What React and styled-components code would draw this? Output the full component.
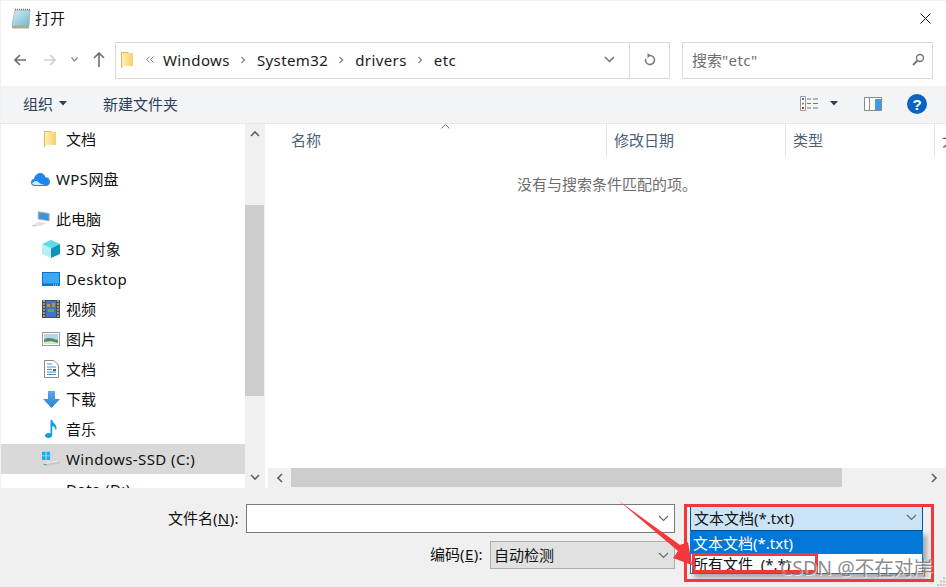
import React from "react";
import styled, { createGlobalStyle } from "styled-components";

const Global = createGlobalStyle`
  html, body { margin: 0; padding: 0; background: #fff; }
  body { font-family: "Noto Sans", "Noto Sans CJK SC", sans-serif; }
  * { box-sizing: border-box; }
`;

const Win = styled.div`
  position: relative; width: 946px; height: 587px; overflow: hidden; background: #fff;
  border-top: 1px solid #f0f0f0; border-left: 1px solid #f0f0f0;
  display: flex; flex-direction: column; font-size: 15px; color: #111;
  font-family: "Noto Sans", "Noto Sans CJK SC", sans-serif; line-height: 20px;
`;
const Latin = styled.span`letter-spacing: .4px;`;
const TitleBar = styled.div`height: 36px; display: flex; align-items: center; padding: 0 0 2px 10px; gap: 3px;`;
const TitleText = styled.span`flex: 1; color: #111;`;
const Close = styled.div`width: 11px; height: 11px; margin-right: 15px; display: flex;`;
const NavBar = styled.div`height: 49px; display: flex; padding-top: 5px; align-items: flex-start;`;
const NavButtons = styled.div`width: 114px; height: 37px; display: flex; align-items: center; padding: 0 0 2px 13px;`;
const NavIcon = styled.span`display: flex; margin-right: ${p => p.$mr || 0}px;`;
const AddressBox = styled.div`
  width: 555px; height: 37px; border: 1px solid #d9d9d9; display: flex; align-items: center; padding: 0 0 2px 5px;
`;
const Crumb = styled.span`
  color: #1a1a1a; letter-spacing: .4px; margin-right: ${p => p.$mr || 0}px; margin-left: ${p => p.$ml || 0}px; display: flex; align-items: center;
`;
const Spacer = styled.span`flex: 1;`;
const AddrEnd = styled.div`
  width: 40px; height: 35px; margin-bottom: -2px; padding-bottom: 2px; border-left: 1px solid #d9d9d9; display: flex; align-items: center; justify-content: center; margin-left: 14px;
`;
const SearchBox = styled.div`
  width: 251px; height: 37px; margin-left: 12px; border: 1px solid #d9d9d9; display: flex; align-items: center;
  padding: 0 7px 2px 9px; justify-content: space-between; color: #6d6d6d;
`;
const ToolBar = styled.div`
  height: 38px; background: #f3f4f6; border-bottom: 1px solid #e7e8ea; display: flex; align-items: center; color: #2b3f5c; padding-bottom: 2px;
`;
const ToolItem = styled.span`display: flex; align-items: center; gap: 6px; margin-left: ${p => p.$ml}px;`;
const Main = styled.div`height: 364px; display: flex;`;
const Sidebar = styled.div`width: 244px; overflow: hidden; height: 364px;`;
const NavRow = styled.div`
  height: 30px; display: flex; align-items: center; padding-left: ${p => p.$indent}px; gap: ${p => p.$tg || 6}px; color: #111;
  margin-bottom: ${p => p.$gap || 0}px; background: ${p => p.$sel ? "#d9d9d9" : "transparent"}; flex: none;
`;
const IconBox = styled.span`
  width: ${p => p.$w || 18}px; height: 18px; display: flex; align-items: center; justify-content: center; flex: none;
`;
const VScroll = styled.div`
  width: 20px; height: 364px; background: #f0f0f0; display: flex; flex-direction: column; margin-right: 3px;
`;
const ScrollBtn = styled.div`height: ${p => p.$h}px; padding-bottom: ${p => p.$pb || 0}px; display: flex; align-items: ${p => p.$end ? "flex-end" : "center"}; justify-content: center;`;
const VThumb = styled.div`width: 19px; height: 191px; background: #cdcdcd; margin-top: ${p => p.$mt}px;`;
const Content = styled.div`flex: 1; display: flex; flex-direction: column; position: relative; min-width: 0;`;
const Header = styled.div`
  height: 32px; display: grid; grid-template-columns: 339px 179px 149px 20px; color: #4c607a; overflow: hidden; position: relative;
`;
const HeaderCell = styled.div`
  padding-left: ${p => p.$pl}px; display: flex; align-items: center; border-right: 1px solid #e5e5e5; white-space: nowrap; overflow: hidden;
`;
const SortMark = styled.span`position: absolute; left: 173px; top: 0; display: flex;`;
const Empty = styled.div`flex: 1; text-align: center; padding-top: 18px; color: #6d6d6d;`;
const HScroll = styled.div`height: 20px; background: #f0f0f0; display: flex; align-items: center; flex: none;`;
const HBtn = styled.div`width: 23px; height: 20px; display: flex; align-items: center; justify-content: center;`;
const HThumb = styled.div`width: 551px; height: 19px; background: #cdcdcd; align-self: flex-start;`;
const HEnd = styled.div`margin-left: auto; width: 24px; display: flex; justify-content: center;`;
const Bottom = styled.div`flex: 1; background: #f0f0f0; display: flex; padding-top: 16px; align-items: flex-start; position: relative;`;
const FormCol = styled.div`width: 674px; display: flex; flex-direction: column; gap: 8px;`;
const FormRow = styled.div`display: flex; justify-content: flex-end; align-items: center; gap: 7px;`;
const Label = styled.label`color: #111; white-space: nowrap; padding-bottom: 2px; u { text-decoration: underline; }`;
const Input = styled.div`
  width: 429px; height: 29px; background: #fff; border: 1px solid #7a7a7a; display: flex; align-items: center; justify-content: flex-end; padding-right: 5px;
`;
const Select = styled.div`
  width: ${p => p.$w}px; height: ${p => p.$h}px; background: ${p => p.$bg}; border: 1px solid ${p => p.$bd};
  display: flex; align-items: center; justify-content: space-between; padding: 0 5px 0 3px; color: #111; white-space: nowrap; flex: none;
`;
const TypeCol = styled.div`width: 233px; margin-left: 15px; position: relative; flex: none;`;
const DropList = styled.div`
  position: absolute; left: 0; top: 27px; width: 233px; height: 43px; background: #fff; border: 1px solid #0078d7;
  box-shadow: 4px 4px 5px rgba(0,0,0,.3);
`;
const DropItem = styled.div`
  height: ${p => p.$h}px; padding-left: 2px; display: flex; align-items: center;
  background: ${p => p.$active ? "#0078d7" : "#fff"}; color: ${p => p.$active ? "#fff" : "#111"};
`;
const RedBox = styled.div`
  position: absolute; left: ${p => p.$x}px; top: ${p => p.$y}px; width: ${p => p.$w}px; height: ${p => p.$h}px;
  border: 3px solid #f5363a; pointer-events: none;
`;
const Overlay = styled.svg`position: absolute; left: -1px; top: -1px; pointer-events: none;`;
const Watermark = styled.div`
  position: absolute; left: 779px; top: 555px; font-size: 19.5px; line-height: 24px; color: rgba(120,120,120,.85);
  text-shadow: 1px 1px 1px rgba(255,255,255,.75); white-space: nowrap;
`;
const Grip = styled.svg`position: absolute; right: 0; bottom: 0;`;

const Chev = ({ d = "down", c = "#606060", s = 10 }) => {
  const paths = { down: "M1 3l4 4 4-4", up: "M1 7l4-4 4 4", left: "M7 1L3 5l4 4", right: "M3 1l4 4-4 4" };
  return <svg width={s} height={s} viewBox="0 0 10 10"><path d={paths[d]} fill="none" stroke={c} strokeWidth="1.6" /></svg>;
};
const SelChev = () => <svg width="11" height="7" viewBox="0 0 11 7"><path d="M1 1l4.500 4.500L10 1" fill="none" stroke="#666" strokeWidth="1.100" /></svg>;
const Crumbsep = () => <svg width="6" height="8" viewBox="0 0 6 8"><path d="M1.500 1l3 3-3 3" fill="none" stroke="#8a8a8a" strokeWidth="1.400" /></svg>;
const Caret = ({ c = "#2b3f5c" }) => <svg width="8" height="5" viewBox="0 0 8 5"><path d="M0 0h8L4 4.500z" fill={c} /></svg>;

const FolderIcon = ({ w = 13, h = 18 }) => (
  <svg width={w} height={h} viewBox="0 0 13 18">
    <defs><linearGradient id="fg" x1="0" x2="1"><stop offset="0" stopColor="#fff0b8" /><stop offset="1" stopColor="#f6cf6a" /></linearGradient></defs>
    <path d="M0 1h7l1 1v12H2L1 17.500 0 16z" fill="#e3b958" />
    <path d="M1 2h11v13H1z" fill="url(#fg)" />
  </svg>
);
const Notepad = () => (
  <svg width="21" height="21" viewBox="0 0 21 21">
    <defs><linearGradient id="np" x1="0" y1="0" x2="1" y2="1"><stop offset="0" stopColor="#d8f0f4" /><stop offset="1" stopColor="#6fb6cc" /></linearGradient></defs>
    <path d="M4 2h15l-1 16H1z" fill="url(#np)" stroke="#88a5ae" strokeWidth=".6" />
    <path d="M1 18h17v2.500H1z" fill="#b5a88e" />
    <path d="M4 1.500h15" stroke="#777" strokeWidth="1.500" strokeDasharray="1 1" />
  </svg>
);
const Cloud = () => (
  <svg width="19" height="13" viewBox="0 0 19 13">
    <path d="M3.500 13C1.500 13 0 11.500 0 9.500S1.300 6 3 6C3.700 2.500 6.500 0 9.200 0c2.600 0 4.600 1.700 5.200 4.300 2.600 0 4.600 1.900 4.600 4.400S17 13 15 13z" fill="#1f86ee" />
    <path d="M1 11c2-4 5-3.500 7-1.500 1.500 1.500 3.500 2 6 2.500H4z" fill="#d6eaff" />
  </svg>
);
const PcIcon = () => (
  <svg width="20" height="18" viewBox="0 0 20 18">
    <path d="M7 1l12 2v8L7 9z" fill="#6f9fc8" stroke="#8c9aa6" strokeWidth=".8" />
    <path d="M8 2.500l10 1.500v6L8 8.500z" fill="#3d93dc" />
    <path d="M1 15l7-3 8 2-7 3z" fill="#dfe3e6" />
    <path d="M0 16l5 1" stroke="#c8ccd0" strokeWidth="1.400" />
  </svg>
);
const Cube = () => (
  <svg width="18" height="18" viewBox="0 0 18 18">
    <path d="M9 0l9 4-9 4.500L0 4z" fill="#5fdbe8" />
    <path d="M0 4l9 4.500V18l-9-4z" fill="#b6f0f3" />
    <path d="M18 4L9 8.500V18l9-4z" fill="#0f93b8" />
  </svg>
);
const DesktopIcon = () => (
  <svg width="18" height="14" viewBox="0 0 18 14">
    <path d="M0 0h18v14H0z" fill="#0d72c9" />
    <path d="M1 1h16v10.500H1z" fill="#3ea6f2" />
    <path d="M11 13h5" stroke="#cfe8ff" strokeDasharray="1 1" />
  </svg>
);
const Film = () => (
  <svg width="18" height="18" viewBox="0 0 18 18">
    <path d="M0 0h18v18H0z" fill="#4d4d4d" />
    <path d="M4 1h10v16H4z" fill="#3f75c9" />
    <path d="M5 4h3v3H5zM10 3h3v4h-3z" fill="#c98a3a" />
    <path d="M6 9h6v3H6z" fill="#6fa14c" />
    <path d="M1 1h2M1 4h2M1 7h2M1 10h2M1 13h2M1 16h2M15 1h2M15 4h2M15 7h2M15 10h2M15 13h2M15 16h2" stroke="#e4e4e4" strokeWidth="1.200" />
  </svg>
);
const Picture = () => (
  <svg width="18" height="14" viewBox="0 0 18 14">
    <path d="M0 0h18v14H0z" fill="#9b9b9b" />
    <path d="M1 1h16v12H1z" fill="#fff" />
    <path d="M2 2h14v10H2z" fill="#b5d6ea" />
    <path d="M2 8c3-3 6-2 14 0v4H2z" fill="#4e8b6b" />
    <path d="M2 10c4-1 9-1 14 1v1H2z" fill="#d7e6c8" />
  </svg>
);
const DocIcon = () => (
  <svg width="15" height="18" viewBox="0 0 15 18">
    <path d="M.5.500H10l4.500 4.500v12.500H.5z" fill="#fff" stroke="#8c8c8c" />
    <path d="M3 4h5M3 7h9M3 9.500h5M3 12h9M3 14.500h9" stroke="#4a90cc" />
    <path d="M9 9h3v2H9z" fill="#1c6fb5" />
  </svg>
);
const DownIcon = () => (
  <svg width="17" height="17" viewBox="0 0 17 17">
    <defs><linearGradient id="dl" x1="0" x2="0" y1="0" y2="1"><stop offset="0" stopColor="#5aa9ec" /><stop offset="1" stopColor="#2b7fd6" /></linearGradient></defs>
    <path d="M5 0h7v8h5l-8.500 9L0 8h5z" fill="url(#dl)" />
  </svg>
);
const MusicIcon = () => (
  <svg width="12" height="18" viewBox="0 0 12 18">
    <path d="M5.500 0h1.700c.3 3 4.300 4 4.300 8 0 1-.3 2-.8 2.700.2-2.700-1.700-4.300-3.500-4.700V15c0 1.700-1.700 3-3.700 3S0 17 0 15.500 1.700 13 3.500 13c.8 0 1.500.1 2 .4z" fill="#0f9bee" />
  </svg>
);
const DriveIcon = () => (
  <svg width="20" height="16" viewBox="0 0 20 16">
    <path d="M0 0h4v4H0zM5 0h4v4H5zM0 5h4v4H0zM5 5h4v4H5z" fill="#16aef0" />
    <path d="M1 13l17-4 2 1.500V13L4 16l-3-1z" fill="#c5c9cb" />
    <path d="M1 13l17-3.500 2 1-16 3z" fill="#eceeee" />
    <path d="M2 14h3" stroke="#46b04a" strokeWidth="1.200" />
  </svg>
);

export default function App() {
  return (
    <Win>
      <Global />
      <TitleBar>
        <Notepad />
        <TitleText>打开</TitleText>
        <Close><svg width="11" height="11" viewBox="0 0 11 11"><path d="M.5.500l10 10M10.500.500l-10 10" stroke="#111" strokeWidth="1" /></svg></Close>
      </TitleBar>
      <NavBar>
        <NavButtons>
          <NavIcon $mr={18}><svg width="12" height="12" viewBox="0 0 12 12"><path d="M6 1L1 6l5 5M1 6h11" fill="none" stroke="#6e6e6e" strokeWidth="1.600" /></svg></NavIcon>
          <NavIcon $mr={15}><svg width="12" height="12" viewBox="0 0 12 12"><path d="M6 1l5 5-5 5M11 6H0" fill="none" stroke="#cfcfcf" strokeWidth="1.600" /></svg></NavIcon>
          <NavIcon $mr={15}><svg width="7" height="5" viewBox="0 0 7 5"><path d="M.5.500L3.500 4l3-3.500" fill="none" stroke="#8a8a8a" strokeWidth="1.300" /></svg></NavIcon>
          <NavIcon><svg width="12" height="15" viewBox="0 0 12 15"><path d="M1 6l5-5 5 5M6 1v14" fill="none" stroke="#6e6e6e" strokeWidth="1.600" /></svg></NavIcon>
        </NavButtons>
        <AddressBox>
          <FolderIcon />
          <Crumb $ml={12} $mr={9}><svg width="8" height="7" viewBox="0 0 8 7"><path d="M3.500.500l-3 3 3 3M7.500.500l-3 3 3 3" fill="none" stroke="#8a8a8a" /></svg></Crumb>
          <Crumb $mr={10}>Windows</Crumb><Crumbsep />
          <Crumb $ml={11} $mr={10}>System32</Crumb><Crumbsep />
          <Crumb $ml={11} $mr={10}>drivers</Crumb><Crumbsep />
          <Crumb $ml={11}>etc</Crumb>
          <Spacer />
          <svg width="11" height="7" viewBox="0 0 11 7"><path d="M1 1l4.500 4.500L10 1" fill="none" stroke="#707070" strokeWidth="1.500" /></svg>
          <AddrEnd><svg width="12" height="13" viewBox="0 0 12 13"><path d="M6 2.500a4.500 4.500 0 1 1-4.300 3.200" fill="none" stroke="#7a7a7a" strokeWidth="1.500" /><path d="M3.500 0L7 2.500 3.500 5z" fill="#7a7a7a" /></svg></AddrEnd>
        </AddressBox>
        <SearchBox>
          <span>搜索<Latin>"etc"</Latin></span>
          <svg width="13" height="13" viewBox="0 0 13 13"><circle cx="8" cy="5" r="3.500" fill="none" stroke="#777" strokeWidth="1.400" /><path d="M5.500 7.500L1 12" stroke="#777" strokeWidth="2" /></svg>
        </SearchBox>
      </NavBar>
      <ToolBar>
        <ToolItem $ml={22}>组织<Caret /></ToolItem>
        <ToolItem $ml={36}>新建文件夹</ToolItem>
        <ToolItem $ml={622}>
          <svg width="18" height="15" viewBox="0 0 18 15">
            <path d="M.5.500h5v14h-5z" fill="#fff" stroke="#9a9a9a" />
            <path d="M2 2h2v2H2z" fill="#3a6ea5" /><path d="M2 6.500h2v2H2z" fill="#b59a2e" /><path d="M2 11h2v2H2z" fill="#b33a2e" />
            <path d="M7 3h4M13 3h5M7 7.500h4M13 7.500h5M7 12h4M13 12h5" stroke="#777" />
          </svg>
        </ToolItem>
        <ToolItem $ml={12}><Caret /></ToolItem>
        <ToolItem $ml={26}>
          <svg width="18" height="14" viewBox="0 0 18 14">
            <path d="M.5.500h17v13H.5z" fill="#fff" stroke="#8a8a8a" />
            <path d="M11 2h6v11h-6z" fill="#3f9ae8" /><path d="M5.500 1v12" stroke="#8a8a8a" />
          </svg>
        </ToolItem>
        <ToolItem $ml={25}>
          <svg width="20" height="20" viewBox="0 0 20 20">
            <circle cx="10" cy="10" r="10" fill="#0a63c2" />
            <text x="10" y="15.500" fontSize="15" fontWeight="700" fill="#fff" textAnchor="middle" fontFamily="Liberation Sans, sans-serif">?</text>
          </svg>
        </ToolItem>
      </ToolBar>
      <Main>
        <Sidebar>
          <NavRow $indent={43} $gap={10} $tg={9}><IconBox $w={13}><FolderIcon /></IconBox>文档</NavRow>
          <NavRow $indent={30} $gap={10} $tg={6}><IconBox $w={19}><Cloud /></IconBox><span><Latin>WPS</Latin>网盘</span></NavRow>
          <NavRow $indent={31}><IconBox><PcIcon /></IconBox>此电脑</NavRow>
          <NavRow $indent={41}><IconBox><Cube /></IconBox><span><Latin>3D </Latin>对象</span></NavRow>
          <NavRow $indent={41}><IconBox><DesktopIcon /></IconBox><Latin>Desktop</Latin></NavRow>
          <NavRow $indent={41}><IconBox><Film /></IconBox>视频</NavRow>
          <NavRow $indent={41}><IconBox><Picture /></IconBox>图片</NavRow>
          <NavRow $indent={41}><IconBox><DocIcon /></IconBox>文档</NavRow>
          <NavRow $indent={41}><IconBox><DownIcon /></IconBox>下载</NavRow>
          <NavRow $indent={41}><IconBox><MusicIcon /></IconBox>音乐</NavRow>
          <NavRow $indent={41} $sel><IconBox><DriveIcon /></IconBox><Latin>Windows-SSD (C:)</Latin></NavRow>
          <NavRow $indent={41}><IconBox /><Latin>Data (D:)</Latin></NavRow>
        </Sidebar>
        <VScroll>
          <ScrollBtn $h={20}><Chev d="up" c="#606060" /></ScrollBtn>
          <VThumb $mt={61} />
          <ScrollBtn $h={92} $end $pb={6}><Chev d="down" c="#606060" /></ScrollBtn>
        </VScroll>
        <Content>
          <Header>
            <HeaderCell $pl={23}>名称</HeaderCell>
            <HeaderCell $pl={7}>修改日期</HeaderCell>
            <HeaderCell $pl={7}>类型</HeaderCell>
            <HeaderCell $pl={7}>大小</HeaderCell>
            <SortMark><svg width="9" height="5" viewBox="0 0 9 5"><path d="M.5 4.500l4-4 4 4" fill="none" stroke="#777" /></svg></SortMark>
          </Header>
          <Empty>没有与搜索条件匹配的项。</Empty>
          <HScroll>
            <HBtn><Chev d="left" /></HBtn>
            <HThumb />
            <HEnd><Chev d="right" /></HEnd>
          </HScroll>
        </Content>
      </Main>
      <Bottom>
        <FormCol>
          <FormRow>
            <Label>文件名<Latin>(<u>N</u>):</Latin></Label>
            <Input><SelChev /></Input>
          </FormRow>
          <FormRow>
            <Label>编码<Latin>(<u>E</u>):</Latin></Label>
            <Select $w={185} $h={28} $bg="#e1e1e1" $bd="#adadad"><span>自动检测</span><SelChev /></Select>
          </FormRow>
        </FormCol>
        <TypeCol>
          <Select $w={233} $h={27} $bg="#cce4f7" $bd="#005499"><span>文本文档(*.txt)</span><SelChev /></Select>
          <DropList>
            <DropItem $h={22} $active>文本文档(*.txt)</DropItem>
            <DropItem $h={19}>所有文件&nbsp;&nbsp;(*.*)</DropItem>
          </DropList>
        </TypeCol>
        <Grip width="9" height="11" viewBox="0 0 9 11">
          <path d="M6 1h2v2H6zM3 4.500h2v2H3zM6 4.500h2v2H6zM0 8h2v2H0zM3 8h2v2H3zM6 8h2v2H6z" fill="#c4c4c4" />
        </Grip>
      </Bottom>
      <RedBox $x={683} $y={503} $w={250} $h={78} />
      <RedBox $x={691} $y={552} $w={126} $h={20} />
      <Overlay width="946" height="587" viewBox="0 0 946 587">
        <path d="M619 501L680 545L688 542L692 565L673 558L678 551Z" fill="#f5363a" />
      </Overlay>
      <Watermark>CSDN @不在对岸</Watermark>
    </Win>
  );
}
